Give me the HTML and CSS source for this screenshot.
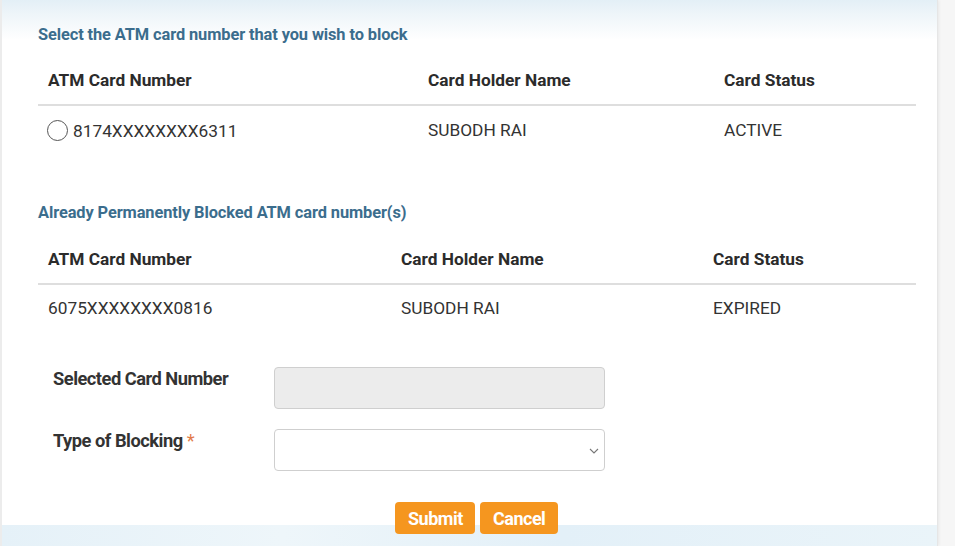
FILE: index.html
```html
<!DOCTYPE html>
<html>
<head>
<meta charset="utf-8">
<link rel="stylesheet" href="styles.css">
</head>
<body>
<div class="page">
  <div class="panel">
    <div class="bottom-band"></div>
    <div class="content">
      <h2 class="section-title t1">Select the ATM card number that you wish to block</h2>
      <div class="table tbl-a">
        <div class="row head">
          <div class="c1">ATM Card Number</div>
          <div class="c2">Card Holder Name</div>
          <div class="c3">Card Status</div>
        </div>
        <div class="row body">
          <div class="c1 radio-cell"><span class="radio"></span>8174XXXXXXXX6311</div>
          <div class="c2">SUBODH RAI</div>
          <div class="c3">ACTIVE</div>
        </div>
      </div>

      <h2 class="section-title t2">Already Permanently Blocked ATM card number(s)</h2>
      <div class="table tbl-b">
        <div class="row head">
          <div class="c1">ATM Card Number</div>
          <div class="c2">Card Holder Name</div>
          <div class="c3">Card Status</div>
        </div>
        <div class="row body">
          <div class="c1">6075XXXXXXXX0816</div>
          <div class="c2">SUBODH RAI</div>
          <div class="c3">EXPIRED</div>
        </div>
      </div>

      <div class="form">
        <div class="form-row">
          <label class="label">Selected Card Number</label>
          <div class="input disabled"></div>
        </div>
        <div class="form-row r2">
          <label class="label">Type of Blocking <span class="req">*</span></label>
          <div class="input select">
            <svg class="chev" width="10" height="6" viewBox="0 0 10 6"><path d="M1 1 L5 5 L9 1" fill="none" stroke="#777" stroke-width="1.1"/></svg>
          </div>
        </div>
      </div>

      <div class="buttons">
        <button class="btn">Submit</button>
        <button class="btn">Cancel</button>
      </div>
    </div>
  </div>
  <div class="side"></div>
</div>
</body>
</html>
```
FILE: styles.css
```css
* { box-sizing: border-box; }
html, body { margin: 0; padding: 0; }
body {
  font-family: Roboto, "Noto Sans", sans-serif;
  color: #333;
  background: #f7f7f7;
  width: 955px;
  height: 546px;
  overflow: hidden;
}
.page {
  display: flex;
  height: 546px;
}
.panel {
  width: 938px;
  height: 546px;
  background: #fff;
  border-left: 2px solid #ececec;
  border-right: 1px solid #e6e6e6;
  box-shadow: 1px 0 3px rgba(0,0,0,0.06);
  display: flex;
  flex-direction: column;
  position: relative;
}
.panel::before {
  content: "";
  position: absolute;
  left: 0; right: 0; top: 0;
  height: 40px;
  background: linear-gradient(180deg, #e3eff6 0%, #eef5f9 35%, rgba(255,255,255,0) 100%);
}
.side {
  flex: 1;
  background: #f6f6f6;
}
.content {
  flex: 1;
  padding: 0 21px 0 36px;
  position: relative;
  z-index: 1;
}
.section-title {
  margin: 0;
  font-size: 16.4px;
  line-height: 19px;
  font-weight: 700;
  color: #3b6d8d;
  letter-spacing: -0.1px;
}
.t1 { padding-top: 25px; height: 57px; }
.t2 { height: 33px; }
.table { width: 878px; }
.row {
  display: flex;
  font-size: 17.3px;
  line-height: 20px;
}
.row.head {
  font-weight: 700;
  height: 49px;
  padding-top: 13px;
  border-bottom: 2px solid #dedede;
  color: #2b2b2b;
}
.row.body {
  color: #333;
  align-items: flex-start;
}
.tbl-a .row.body { height: 97px; padding-top: 14px; }
.tbl-b .row.body { height: 82px; padding-top: 13px; }
.c1 { padding-left: 10px; }
.tbl-a .c1 { width: 390px; }
.tbl-a .c2 { width: 296px; }
.tbl-b .c1 { width: 363px; }
.tbl-b .c2 { width: 312px; }
.radio-cell {
  display: flex;
  align-items: center;
  padding-left: 9px;
}
.radio {
  width: 21px;
  height: 21px;
  border: 1.5px solid #555;
  border-radius: 50%;
  margin-right: 5px;
  display: inline-block;
}
.form {
  padding-left: 15px;
}
.form-row {
  display: flex;
  align-items: flex-start;
  height: 62px;
}
.label {
  width: 221px;
  font-size: 18.3px;
  line-height: 21px;
  font-weight: 700;
  color: #333;
  letter-spacing: -0.5px;
  padding-top: 1px;
}
.req { color: #e27a4a; font-weight: 400; }
.input {
  width: 331px;
  height: 42px;
  border: 1px solid #cfcfcf;
  border-radius: 4px;
  background: #fff;
}
.input.disabled { background: #ececec; }
.input.select {
  height: 42px;
  display: flex;
  align-items: center;
  justify-content: flex-end;
  padding-right: 5px;
}
.chev { margin-top: 2px; }
.buttons {
  display: flex;
  gap: 5px;
  padding-left: 357px;
  margin-top: 11px;
}
.btn {
  font-family: Roboto, sans-serif;
  background: #f5961f;
  color: #fff;
  border: 0;
  border-radius: 4px;
  height: 32px;
  font-size: 18px;
  font-weight: 700;
  letter-spacing: -0.5px;
  padding: 0 13px;
}
.btn:first-child { width: 80px; }
.btn:last-child { width: 78px; }
.bottom-band {
  position: absolute;
  left: 0; right: 0; bottom: 0;
  height: 21px;
  background: linear-gradient(90deg, #e5f1f8 0%, #eef6fa 30%, #e3f0f8 60%, #eaf4f9 100%);
}
```
